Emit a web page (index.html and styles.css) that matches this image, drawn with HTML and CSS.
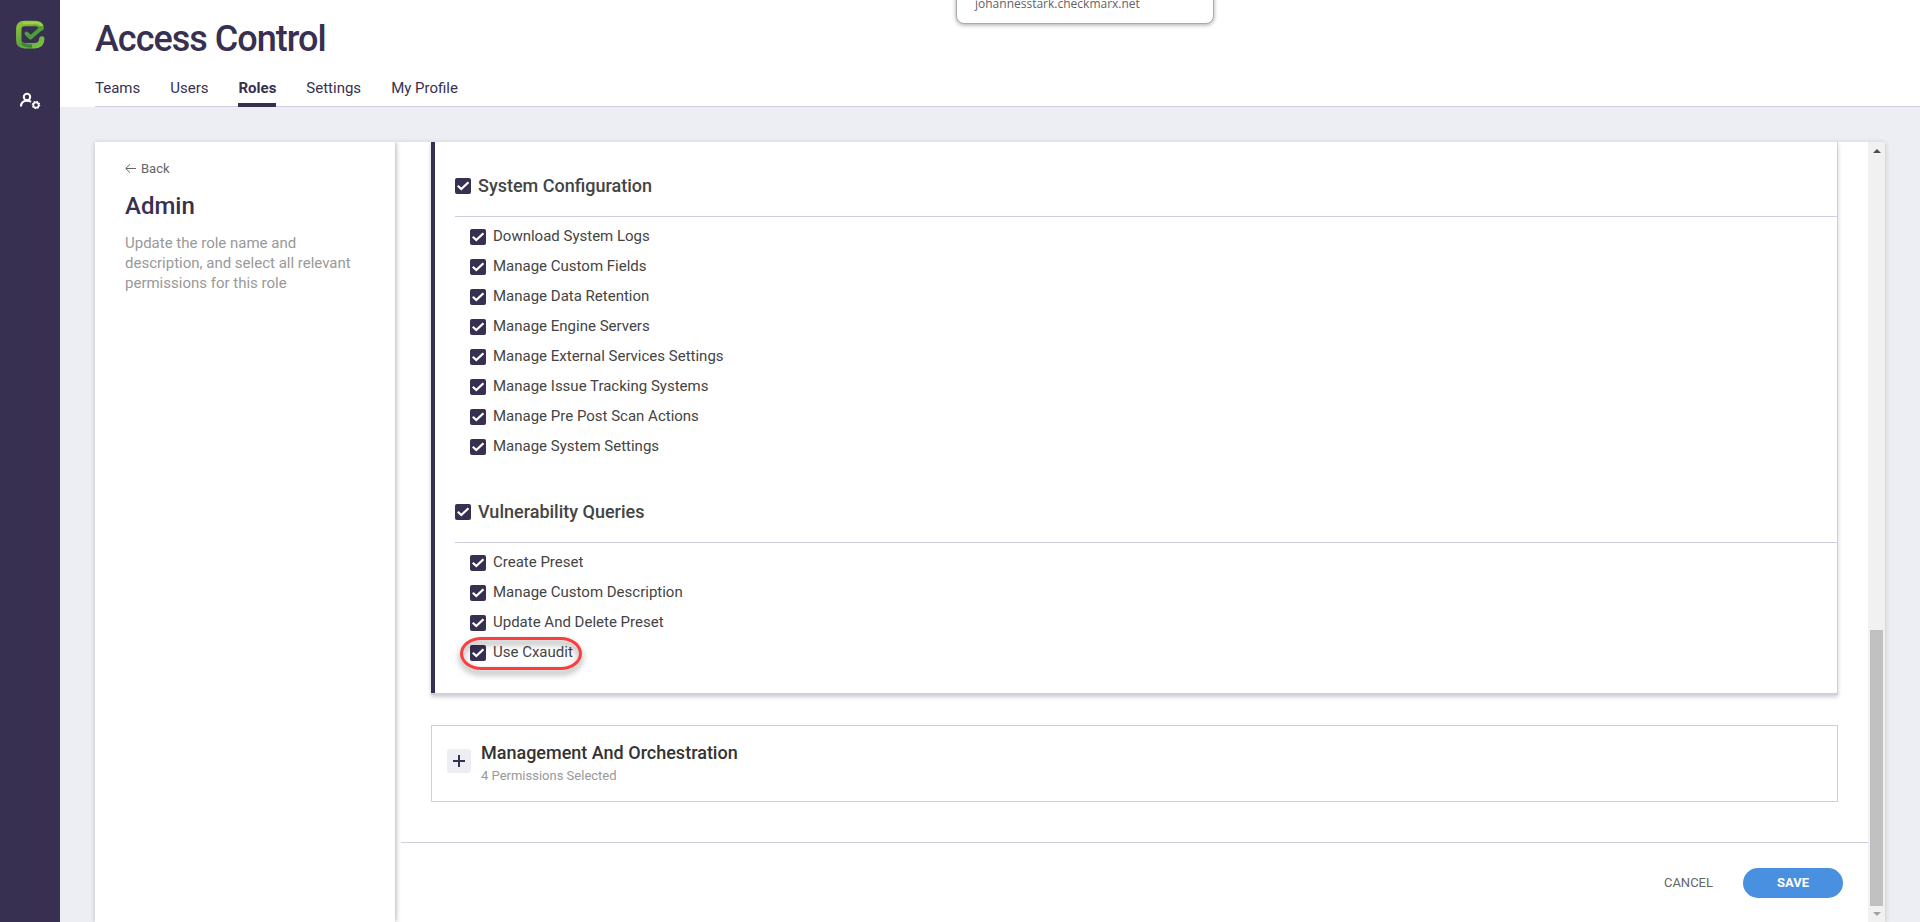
FILE: index.html
```html
<!DOCTYPE html>
<html lang="en">
<head>
<meta charset="utf-8">
<title>Access Control</title>
<link rel="stylesheet" href="styles.css">
</head>
<body>
<div class="app">
  <aside class="rail">
    <a class="rail-logo" href="#" aria-label="Home">
      <svg width="30" height="30" viewBox="0 0 30 30" fill="none">
        <defs>
          <linearGradient id="leaf" x1="0" y1="0" x2="1" y2="1">
            <stop offset="0" stop-color="#8cc43c"/>
            <stop offset=".5" stop-color="#5fa53c"/>
            <stop offset="1" stop-color="#7cc142"/>
          </linearGradient>
        </defs>
        <path d="M26 8Q26 3.500 20 3.500H9.500Q3.800 3.500 3.800 9.500V20Q3.800 25.700 9.500 25.700H19.500Q26.500 25.700 26.800 19" stroke="url(#leaf)" stroke-width="5.400" stroke-linecap="round"/>
        <path d="M9 2.700H20Q24.500 2.700 26.500 5.500" stroke="#a3cf3e" stroke-width="3" stroke-linecap="round"/>
        <path d="M7.500 23Q9 26 17 26" stroke="#3a8832" stroke-width="3.600"/>
        <path d="M11.500 13.500L15.500 17.500L26.500 8" stroke="#4f9c3c" stroke-width="4" stroke-linecap="round" stroke-linejoin="round"/>
      </svg>
    </a>
    <a class="rail-link" href="#" aria-label="Access control">
      <svg width="22" height="18" viewBox="0 0 22 18" fill="none" stroke="#fff">
        <circle cx="8" cy="5" r="3.200" stroke-width="2"/>
        <path d="M2 14.500C2 10.500 4.500 8.700 8 8.700C9.800 8.700 11 9.100 12 9.900" stroke-width="2"/>
        <circle cx="17" cy="13" r="2.700" stroke-width="1.700"/>
        <circle cx="17" cy="13" r="3.600" stroke-width="1.300" stroke-dasharray="1.400 1.427"/>
      </svg>
    </a>
  </aside>
  <div class="page">
    <header class="header">
      <h1 class="title">Access Control</h1>
      <nav class="tabs">
        <a class="tab" href="#">Teams</a>
        <a class="tab" href="#">Users</a>
        <a class="tab tab-active" href="#">Roles</a>
        <a class="tab" href="#">Settings</a>
        <a class="tab" href="#">My Profile</a>
      </nav>
    </header>
    <main class="panel">
      <section class="summary">
        <a class="back" href="#">
          <svg width="12" height="10" viewBox="0 0 12 10" fill="none" stroke="#666"><path d="M11 4.500H1M5 .300L.700 4.500L5 8.700"/></svg>
          Back
        </a>
        <h2 class="role-name">Admin</h2>
        <p class="role-help">Update the role name and description, and select all relevant permissions for this role</p>
      </section>
      <form class="editor">
        <div class="permissions">
          <div class="card card-open">
            <section class="group">
              <label class="group-head"><input class="check" type="checkbox" checked>System Configuration</label>
              <div class="items">
                <label class="item"><input class="check" type="checkbox" checked>Download System Logs</label>
                <label class="item"><input class="check" type="checkbox" checked>Manage Custom Fields</label>
                <label class="item"><input class="check" type="checkbox" checked>Manage Data Retention</label>
                <label class="item"><input class="check" type="checkbox" checked>Manage Engine Servers</label>
                <label class="item"><input class="check" type="checkbox" checked>Manage External Services Settings</label>
                <label class="item"><input class="check" type="checkbox" checked>Manage Issue Tracking Systems</label>
                <label class="item"><input class="check" type="checkbox" checked>Manage Pre Post Scan Actions</label>
                <label class="item"><input class="check" type="checkbox" checked>Manage System Settings</label>
              </div>
            </section>
            <section class="group">
              <label class="group-head"><input class="check" type="checkbox" checked>Vulnerability Queries</label>
              <div class="items">
                <label class="item"><input class="check" type="checkbox" checked>Create Preset</label>
                <label class="item"><input class="check" type="checkbox" checked>Manage Custom Description</label>
                <label class="item"><input class="check" type="checkbox" checked>Update And Delete Preset</label>
                <label class="item item-marked"><input class="check" type="checkbox" checked>Use Cxaudit</label>
              </div>
            </section>
          </div>
          <section class="card card-closed">
            <button class="expand" type="button" aria-label="Expand">
              <svg width="12" height="12" viewBox="0 0 12 12" stroke="#373050" stroke-width="2"><path d="M6 0V12M0 6H12"/></svg>
            </button>
            <div>
              <h3 class="card-title">Management And Orchestration</h3>
              <p class="card-note">4 Permissions Selected</p>
            </div>
          </section>
        </div>
        <footer class="actions">
          <button class="btn" type="button">CANCEL</button>
          <button class="btn btn-primary" type="submit">SAVE</button>
        </footer>
      </form>
      <div class="scrollbar" aria-hidden="true">
        <svg class="arrow" width="8" height="4" viewBox="0 0 8 4"><path d="M0 4L4 0L8 4Z" fill="#505050"/></svg>
        <div class="track"><div class="thumb"></div></div>
        <svg class="arrow" width="8" height="4" viewBox="0 0 8 4"><path d="M0 0H8L4 4Z" fill="#a3a3a3"/></svg>
      </div>
    </main>
  </div>
</div>
<div class="tab-tip">johannesstark.checkmarx.net</div>
</body>
</html>
```
FILE: styles.css
```css
* {
  box-sizing: border-box;
}

body {
  margin: 0;
  font-family: Roboto, "Liberation Sans", sans-serif;
  font-size: 15px;
  line-height: 20px;
  color: #444;
  background: #edeef4;
}

h1, h2, h3, p {
  margin: 0;
}

a {
  color: inherit;
  text-decoration: none;
}

button {
  border: 0;
  padding: 0;
  font: inherit;
}

.app {
  display: flex;
  height: 100vh;
  overflow: hidden;
}

.rail {
  flex: 0 0 60px;
  display: flex;
  flex-direction: column;
  align-items: center;
  gap: 42px;
  padding-top: 20px;
  background: #373050;
}

.rail svg {
  display: block;
}

.page {
  flex: 1;
  min-width: 0;
  display: flex;
  flex-direction: column;
}

.header {
  padding: 19px 0 0 35px;
  background: #fff;
}

.title {
  font-size: 36px;
  line-height: 40px;
  font-weight: 500;
  letter-spacing: -1px;
  color: #373050;
}

.tabs {
  display: flex;
  gap: 30px;
  margin-top: 19px;
  color: #373050;
  box-shadow: inset 0 -1px #cfcee0;
}

.tab {
  padding-bottom: 5px;
  border-bottom: 4px solid transparent;
}

.tab-active {
  font-weight: 700;
  border-color: #373050;
}

.panel {
  flex: 1;
  min-height: 0;
  display: flex;
  margin: 35px 35px 0 35px;
  background: #fff;
  box-shadow: 0 1px 5px rgba(0, 0, 0, .2);
}

.summary {
  flex: 0 0 300px;
  padding: 17px 30px;
  box-shadow: 1px 0 5px rgba(0, 0, 0, .3);
  clip-path: inset(0 -8px 0 0);
}

.back {
  display: flex;
  align-items: center;
  gap: 4px;
  font-size: 13px;
  color: #666;
}

.role-name {
  margin-top: 12px;
  font-size: 24px;
  line-height: 30px;
  font-weight: 500;
  color: #373050;
}

.role-help {
  margin-top: 12px;
  color: #999;
}

.editor {
  flex: 1;
  min-width: 0;
  display: flex;
  flex-direction: column;
  margin-left: 6px;
}

.permissions {
  padding: 0 30px 40px;
  overflow: hidden;
}

.card {
  border: 1px solid #d0cfdf;
}

.card-open {
  padding: 14px 0 25px 24px;
  border-width: 0 1px 2px 0;
  box-shadow: inset 4px 0 #373050, 0 2px 4px rgba(0, 0, 0, .2);
}

.group + .group {
  margin-top: 20px;
}

.group-head {
  display: flex;
  align-items: center;
  gap: 7px;
  height: 61px;
  border-bottom: 1px solid #d0cfdf;
  font-size: 18px;
  font-weight: 500;
}

.items {
  display: flex;
  flex-direction: column;
  align-items: flex-start;
  padding: 5px 0 0 15px;
}

.item {
  display: flex;
  align-items: center;
  gap: 7px;
  height: 30px;
  padding-bottom: 2px;
}

.check {
  appearance: none;
  display: grid;
  place-items: center;
  width: 16px;
  height: 16px;
  margin: 0;
  border-radius: 2px;
  background: #373050;
}

.item .check {
  margin-top: 2px;
}

.check:checked::before {
  content: "";
  width: 13px;
  height: 10px;
  background: #fff;
  clip-path: polygon(4% 54%, 15% 40%, 37% 65%, 86% 6%, 98% 20%, 37% 94%);
}

.item-marked {
  position: relative;
}

.item-marked::after {
  content: "";
  position: absolute;
  inset: -1px -9px -2px -10px;
  border: 3px solid #f83e3e;
  border-radius: 22px / 17px;
  filter: drop-shadow(0 4px 3px rgba(0, 0, 0, .45));
}

.card-closed {
  display: flex;
  align-items: flex-start;
  gap: 10px;
  margin-top: 30px;
  padding: 15px;
}

.expand {
  display: grid;
  place-items: center;
  width: 24px;
  height: 24px;
  margin-top: 8px;
  border-radius: 3px;
  background: #edeef4;
}

.card-title {
  margin-bottom: 1px;
  font-size: 18px;
  line-height: 24px;
  font-weight: 500;
  color: #333;
}

.card-note {
  font-size: 13px;
  color: #999;
}

.actions {
  display: flex;
  justify-content: flex-end;
  align-items: center;
  gap: 30px;
  padding: 25px 25px 24px;
  border-top: 1px solid #d0cfdf;
}

.btn {
  height: 30px;
  background: none;
  font-size: 13px;
  color: #666;
}

.btn-primary {
  width: 100px;
  border-radius: 15px;
  background: #4a90e0;
  font-weight: 700;
  color: #fff;
}

.scrollbar {
  flex: 0 0 17px;
  display: flex;
  flex-direction: column;
  align-items: center;
  gap: 6px;
  padding: 7px 0 6px;
  background: #f1f1f1;
}

.arrow {
  flex: none;
}

.track {
  flex: 1;
  width: 13px;
  display: flex;
  align-items: flex-end;
}

.thumb {
  width: 100%;
  height: 37%;
  background: #c1c1c1;
}

.tab-tip {
  position: absolute;
  top: -30px;
  left: 956px;
  width: 258px;
  padding: 23px 18px 9px;
  border: 1px solid #aaa;
  border-radius: 8px;
  background: #fff;
  box-shadow: 0 1px 4px rgba(0, 0, 0, .35);
  font-family: "Open Sans", sans-serif;
  font-size: 12px;
  color: #5f6368;
}
```
